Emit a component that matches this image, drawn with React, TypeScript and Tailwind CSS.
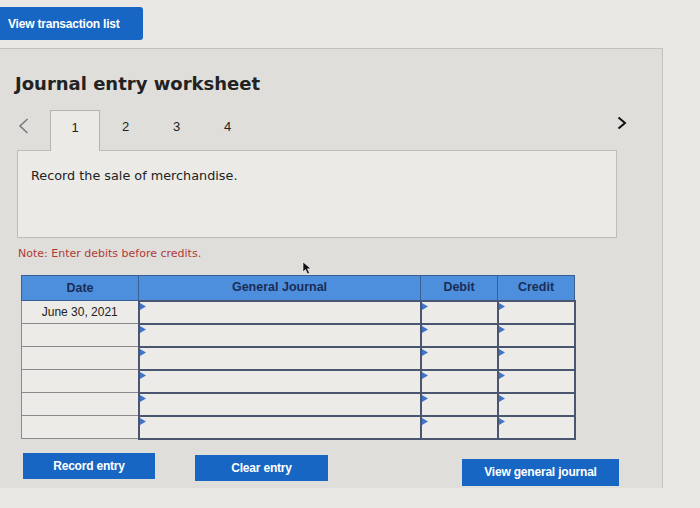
import React from "react";

const Marker = () => (
  <svg className="absolute left-[0px] top-[1px]" width="6" height="8" viewBox="0 0 6 8">
    <path d="M0 0 L6 3.5 L0 7 Z" fill="#3f74c8" />
  </svg>
);

const rows = ["June 30, 2021", "", "", "", "", ""];

export default function App() {
  return (
    <div className="relative w-[700px] h-[508px] overflow-hidden bg-[#e9e8e4]">
      <div className="pt-[7px]">
        <button className="flex h-[33px] w-[143px] items-center rounded-r-[3px] bg-[#1766c4] pl-[8px] text-[12px] font-bold text-white [font-family:'Liberation_Sans',Arial,sans-serif] tracking-[-0.2px]">
          View transaction list
        </button>
      </div>
      <div className="mt-[8px] h-[440px] w-[663px] border-t border-r border-[#c3c2bf] bg-[#dfdedb]">
        <h1 className="pl-[15px] pt-[23px] text-[18px] leading-[24px] font-bold text-[#222] [font-family:'DejaVu_Sans',Verdana,sans-serif]">
          Journal entry worksheet
        </h1>
        <div className="ml-[17px] mt-[14px] w-[600px]">
          <div className="relative z-10 -mb-[1px] flex h-[41px] items-stretch">
            <div className="flex w-[33px] items-center pl-[1px] pb-[9px]">
              <svg width="11" height="16" viewBox="0 0 11 16">
                <path d="M9.5 1 L2 8 L9.5 15" fill="none" stroke="#7a7a7a" strokeWidth="1.6" />
              </svg>
            </div>
            <div className="flex w-[50px] items-center justify-center border border-b-0 border-[#b5b4b1] bg-[#ebeae7] pb-[7px] text-[13px] text-[#222] [font-family:'Liberation_Sans',Arial,sans-serif]">
              1
            </div>
            {["2", "3", "4"].map((t) => (
              <div key={t} className="flex w-[51px] items-center justify-center pb-[7px] text-[13px] text-[#222] [font-family:'Liberation_Sans',Arial,sans-serif]">
                {t}
              </div>
            ))}
            <div className="flex flex-1 items-center justify-end">
              <svg className="mr-[-10px] mb-[16px]" width="10" height="14" viewBox="0 0 10 14">
                <path d="M1.5 1.5 L8 7 L1.5 12.5" fill="none" stroke="#111" strokeWidth="2" />
              </svg>
            </div>
          </div>
          <div className="h-[88px] border border-[#bdbcb9] bg-[#ebeae7] pl-[13px] pt-[17px] text-[12.8px] leading-[16px] text-[#222] [font-family:'DejaVu_Sans',Verdana,sans-serif]">
            Record the sale of merchandise.
          </div>
        </div>
        <div className="ml-[18px] mt-[9px] text-[11px] leading-[14px] text-[#b03a36] [font-family:'DejaVu_Sans',Verdana,sans-serif]">
          Note: Enter debits before credits.
        </div>
        <table className="ml-[21px] mt-[14px] border-collapse [font-family:'Liberation_Sans',Arial,sans-serif]">
          <thead>
            <tr className="h-[25px] bg-[#4d8fdc] text-[12.5px] font-bold text-[#1b2d57]">
              <th className="w-[117px] border border-[#3a5f92] font-bold">Date</th>
              <th className="w-[282px] border border-[#3a5f92] font-bold">General Journal</th>
              <th className="w-[77px] border border-[#3a5f92] font-bold">Debit</th>
              <th className="w-[77px] border border-[#3a5f92] font-bold">Credit</th>
            </tr>
          </thead>
          <tbody>
            {rows.map((d, i) => (
              <tr key={i} className="h-[23px] bg-[#ecebe8]">
                <td className="border border-[#8a8a8a] text-center text-[12px] text-[#222]">{d}</td>
                <td className="relative border-[2.5px] border-[#4a5670]">
                  <Marker />
                </td>
                <td className="relative border-[2.5px] border-[#4a5670]">
                  <Marker />
                </td>
                <td className="relative border-[2.5px] border-[#4a5670]">
                  <Marker />
                </td>
              </tr>
            ))}
          </tbody>
        </table>
        <div className="mt-[13px] flex items-start pl-[23px] [font-family:'Liberation_Sans',Arial,sans-serif] text-[12px] font-bold text-white tracking-[-0.2px]">
          <button className="h-[26px] w-[132px] bg-[#1766c4]">Record entry</button>
          <button className="ml-[40px] mt-[2px] h-[26px] w-[133px] bg-[#1766c4]">Clear entry</button>
          <button className="ml-[134px] mt-[6px] h-[27px] w-[157px] bg-[#1766c4]">View general journal</button>
        </div>
      </div>
      <svg className="absolute left-[302px] top-[261px]" width="12" height="14" viewBox="0 0 12 14">
        <path d="M1 1 L1 11 L3.5 8.5 L5.5 13 L7.5 12 L5.5 7.8 L9 7.8 Z" fill="#111" stroke="#fff" strokeWidth="0.6" />
      </svg>
    </div>
  );
}
